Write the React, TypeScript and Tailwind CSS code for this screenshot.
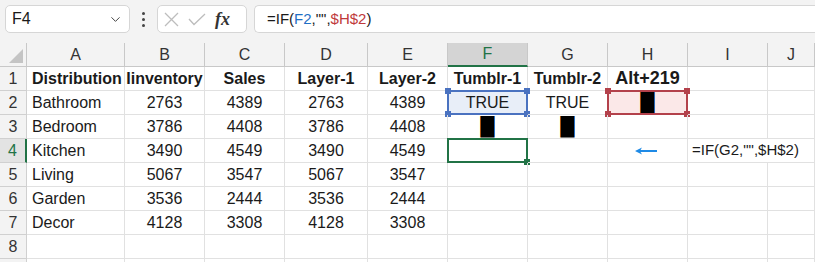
import { ChevronDown } from 'lucide-react';

const font = "font-['Liberation_Sans',Arial,sans-serif]";
const cols = 'grid-cols-[27px_98px_80px_80px_83px_80px_80px_80px_80px_80px_1fr]';
const letters = ['A', 'B', 'C', 'D', 'E', 'F', 'G', 'H', 'I', 'J'];

const rows: [string, number, number, number, number][] = [
  ['Bathroom', 2763, 4389, 2763, 4389],
  ['Bedroom', 3786, 4408, 3786, 4408],
  ['Kitchen', 3490, 4549, 3490, 4549],
  ['Living', 5067, 3547, 5067, 3547],
  ['Garden', 3536, 2444, 3536, 2444],
  ['Decor', 4128, 3308, 4128, 3308],
];

function Handles({ color, corners }: { color: string; corners: string[] }) {
  const pos: Record<string, string> = {
    tl: '-top-[3px] -left-[3px]',
    tr: '-top-[3px] -right-[3px]',
    bl: '-bottom-[3px] -left-[3px]',
    br: '-bottom-[3px] -right-[3px]',
  };
  return (
    <>
      {corners.map((c) => (
        <span key={c} className={`absolute w-[6px] h-[6px] ${color} ${pos[c]}`} />
      ))}
    </>
  );
}

function Block() {
  return (
    <span className="font-['DejaVu_Sans',sans-serif] text-[18px] leading-none text-black">█</span>
  );
}

function Cell({ children, className = '' }: { children?: React.ReactNode; className?: string }) {
  return (
    <div className={`h-[24px] border-r border-b border-[#e1e1e1] flex items-center justify-center relative ${className}`}>
      {children}
    </div>
  );
}

function RowHead({ n, active = false }: { n?: number; active?: boolean }) {
  return (
    <div
      className={`h-[24px] border-b border-r flex items-center justify-center text-[16px] ${
        active
          ? 'bg-[#e3e3e3] border-b-[#d0d0d0] border-r-2 border-r-[#217346] text-[#217346]'
          : 'bg-[#f3f3f3] border-[#d0d0d0] text-[#333]'
      }`}
    >
      {n}
    </div>
  );
}

export default function App() {
  return (
    <div className={`w-[815px] h-[262px] overflow-hidden bg-white ${font} text-[#1a1a1a]`}>
      {/* Formula bar */}
      <div className="h-[43px] bg-[#f3f3f3] flex items-start pt-[5px] pl-[5px]">
        <div className="w-[125px] h-[28px] bg-white border border-[#d6d6d6] rounded-[5px] flex items-center justify-between pl-[6px] pr-[6px] text-[16px]">
          <span>F4</span>
          <ChevronDown className="w-[15px] h-[15px] text-[#444]" strokeWidth={1.6} />
        </div>
        <div className="w-[27px] h-[28px] flex flex-col items-center justify-center gap-[3px]">
          <span className="w-[3px] h-[3px] bg-[#444] rounded-full" />
          <span className="w-[3px] h-[3px] bg-[#444] rounded-full" />
          <span className="w-[3px] h-[3px] bg-[#444] rounded-full" />
        </div>
        <div className="w-[90px] h-[28px] bg-white border border-[#d6d6d6] rounded-[5px] flex items-center pl-[6px] gap-[9px]">
          <svg width="15" height="15" viewBox="0 0 15 15" stroke="#bdbdbd" strokeWidth="1.3" fill="none">
            <path d="M1 1 L14 14 M14 1 L1 14" />
          </svg>
          <svg width="18" height="13" viewBox="0 0 18 13" stroke="#bdbdbd" strokeWidth="1.3" fill="none">
            <path d="M1 6 L6 11.5 L17 1" />
          </svg>
          <span className="font-['Liberation_Serif',serif] italic font-bold text-[18px] text-[#333] leading-none">
            fx
          </span>
        </div>
        <div className="flex-1 ml-[7px] h-[28px] bg-white border border-[#d6d6d6] border-r-0 rounded-l-[5px] flex items-center pl-[12px] text-[15px]">
          <span>=IF(</span>
          <span className="text-[#1f6fc5]">F2</span>
          <span>,"",</span>
          <span className="text-[#c0393b]">$H$2</span>
          <span>)</span>
        </div>
      </div>

      {/* Sheet */}
      <div className={`grid ${cols} text-[16px]`}>
        <div className="h-[24px] bg-[#f3f3f3] border-r border-b border-[#c8c8c8] relative">
          <svg className="absolute right-[3px] bottom-[3px]" width="14" height="14" viewBox="0 0 14 14">
            <path d="M14 0 L14 14 L0 14 Z" fill="#c4c4c4" />
          </svg>
        </div>
        {letters.map((l) => (
          <div
            key={l}
            className={`h-[24px] border-r flex items-center justify-center ${
              l === 'F'
                ? 'bg-[#d4d4d4] border-r-[#c8c8c8] border-b-2 border-b-[#217346] text-[#217346]'
                : 'bg-[#f3f3f3] border-[#c8c8c8] border-b text-[#333]'
            }`}
          >
            {l}
          </div>
        ))}

        {/* row 1 */}
        <RowHead n={1} />
        <Cell className="justify-start pl-[5px] font-bold">Distribution</Cell>
        <Cell className="font-bold">Iinventory</Cell>
        <Cell className="font-bold">Sales</Cell>
        <Cell className="font-bold">Layer-1</Cell>
        <Cell className="font-bold">Layer-2</Cell>
        <Cell className="font-bold">Tumblr-1</Cell>
        <Cell className="font-bold">Tumblr-2</Cell>
        <Cell className="font-bold text-[18px]">Alt+219</Cell>
        <Cell />
        <Cell />

        {rows.map((r, i) => {
          const n = i + 2;
          return [
            <RowHead key={`h${n}`} n={n} active={n === 4} />,
            <Cell key={`a${n}`} className="justify-start pl-[5px]">{r[0]}</Cell>,
            <Cell key={`b${n}`}>{r[1]}</Cell>,
            <Cell key={`c${n}`}>{r[2]}</Cell>,
            <Cell key={`d${n}`}>{r[3]}</Cell>,
            <Cell key={`e${n}`}>{r[4]}</Cell>,
            n === 2 ? (
              <Cell key="f2" className="bg-[#e8eef8]">
                <span className="absolute -inset-[1px] border-2 border-[#4a72c0]" />
                <Handles color="bg-[#4a72c0]" corners={['tl', 'tr', 'bl', 'br']} />
                TRUE
              </Cell>
            ) : n === 3 ? (
              <Cell key="f3"><Block /></Cell>
            ) : n === 4 ? (
              <Cell key="f4">
                <span className="absolute -inset-[1px] border-2 border-[#217346]" />
                <span className="absolute -bottom-[3px] -right-[3px] w-[6px] h-[6px] bg-[#217346]" />
              </Cell>
            ) : (
              <Cell key={`f${n}`} />
            ),
            n === 2 ? (
              <Cell key="g2">TRUE</Cell>
            ) : n === 3 ? (
              <Cell key="g3"><Block /></Cell>
            ) : (
              <Cell key={`g${n}`} />
            ),
            n === 2 ? (
              <Cell key="h2" className="bg-[#fbe8e8]">
                <span className="absolute -inset-[1px] border-2 border-[#b3414b]" />
                <Handles color="bg-[#b3414b]" corners={['tl', 'tr', 'bl', 'br']} />
                <Block />
              </Cell>
            ) : n === 4 ? (
              <Cell key="h4" className="pr-[4px]">
                <svg width="22" height="8" viewBox="0 0 22 8">
                  <path d="M0 4 L7 0.5 L5.5 3 L22 3 L22 5 L5.5 5 L7 7.5 Z" fill="#1e8ae6" />
                </svg>
              </Cell>
            ) : (
              <Cell key={`h${n}x`} />
            ),
            n === 4 ? (
              <Cell key="i4" className="col-span-2 justify-start pl-[4px] text-[15px] whitespace-nowrap">
                =IF(G2,"",$H$2)
              </Cell>
            ) : (
              [<Cell key={`i${n}`} />, <Cell key={`j${n}`} />]
            ),
          ];
        })}

        <RowHead n={8} />
        {letters.map((l) => (
          <Cell key={`${l}8`} />
        ))}
        <RowHead />
        {letters.map((l) => (
          <Cell key={`${l}9`} />
        ))}
      </div>
    </div>
  );
}
